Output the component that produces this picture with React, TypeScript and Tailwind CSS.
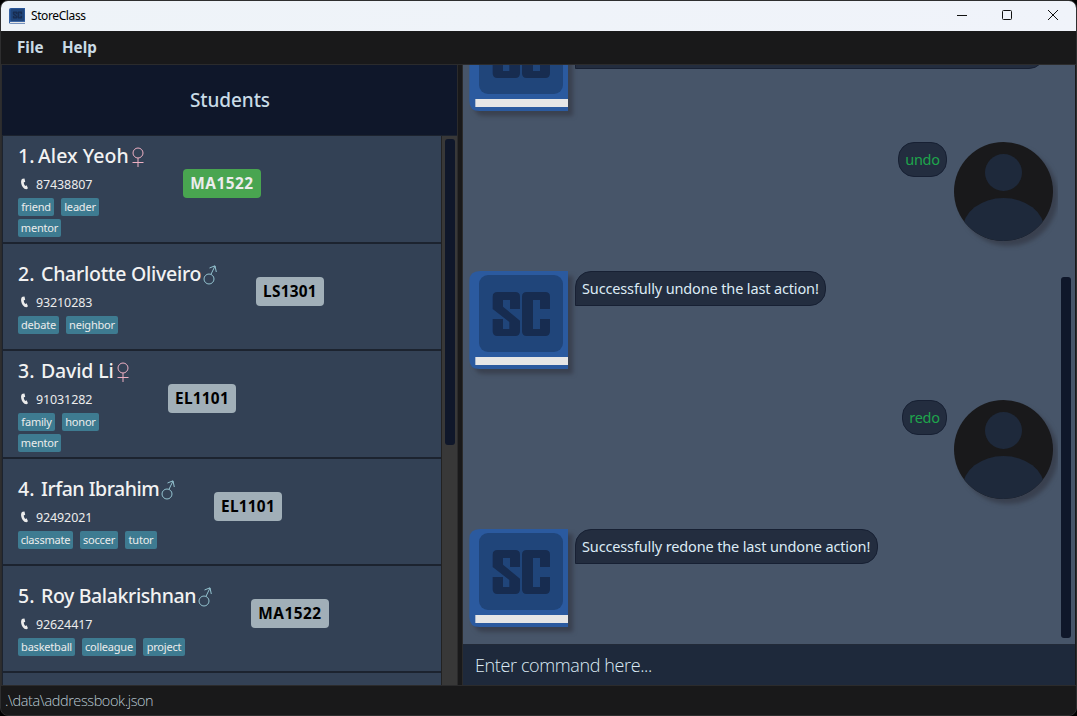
import type { ReactNode } from "react";

type Student = {
  index: string;
  name: string;
  female?: boolean;
  phone: string;
  tags: { label: string; size: string }[];
  module: string;
  badge: string;
  column: string;
  nameStyle: string;
};

const students: Student[] = [
  {
    index: "1.",
    name: "Alex Yeoh",
    female: true,
    phone: "87438807",
    tags: [
      { label: "friend", size: "w-9" },
      { label: "leader", size: "w-[38px]" },
      { label: "mentor", size: "w-[43px]" },
    ],
    module: "MA1522",
    badge: "w-[78px] bg-[#49a550] tracking-[0.5px] text-[#ececec]",
    column: "w-[165px]",
    nameStyle: "w-[93px] tracking-[0.05px]",
  },
  {
    index: "2.",
    name: "Charlotte Oliveiro",
    phone: "93210283",
    tags: [
      { label: "debate", size: "w-[41px]" },
      { label: "neighbor", size: "w-[52px]" },
    ],
    module: "LS1301",
    badge: "w-[68px] bg-[#a1afb8] tracking-[0.25px] text-black",
    column: "w-[238px]",
    nameStyle: "w-[162px] tracking-[-0.25px]",
  },
  {
    index: "3.",
    name: "David Li",
    female: true,
    phone: "91031282",
    tags: [
      { label: "family", size: "w-[37px]" },
      { label: "honor", size: "w-[37px]" },
      { label: "mentor", size: "w-[43px]" },
    ],
    module: "EL1101",
    badge: "w-[68px] bg-[#a1afb8] tracking-[0.25px] text-black",
    column: "w-[150px]",
    nameStyle: "w-[75px] tracking-[-0.15px]",
  },
  {
    index: "4.",
    name: "Irfan Ibrahim",
    phone: "92492021",
    tags: [
      { label: "classmate", size: "w-[55px]" },
      { label: "soccer", size: "w-[38px]" },
      { label: "tutor", size: "w-8" },
    ],
    module: "EL1101",
    badge: "w-[68px] bg-[#a1afb8] tracking-[0.25px] text-black",
    column: "w-[196px]",
    nameStyle: "w-[120px] tracking-[-0.48px]",
  },
  {
    index: "5.",
    name: "Roy Balakrishnan",
    phone: "92624417",
    tags: [
      { label: "basketball", size: "w-[57px]" },
      { label: "colleague", size: "w-[54px]" },
      { label: "project", size: "w-[42px]" },
    ],
    module: "MA1522",
    badge: "w-[78px] bg-[#a1afb8] tracking-[0.5px] text-black",
    column: "w-[233px]",
    nameStyle: "w-[157px] tracking-[-0.38px]",
  },
];

function Book({ className }: { className: string }) {
  return (
    <svg viewBox="27 33 297 297" className={className}>
      <path d="M324 33H60Q28 33 28 63V297Q28 327 58 327H324Z" fill="#2b5a9f" />
      <rect x="57" y="45" width="252" height="231" rx="27" fill="#20457a" />
      <path
        fill="#172c50"
        d="M98 110Q98 96 112 96H166Q180 96 180 110V147H150V120H129V140L180 182V214Q180 228 166 228H112Q98 228 98 214V177H129V207H148V186L98 147Z M186 110Q186 96 200 96H256Q270 96 270 110V147H240V120H219V207H240V177H270V214Q270 228 256 228H200Q186 228 186 214Z"
      />
      <rect x="46" y="291" width="278" height="24" fill="#e6e6e6" />
    </svg>
  );
}

function Person() {
  return (
    <svg viewBox="0 0 99 99" className="ml-[7px] size-[99px] shrink-0 drop-shadow-[5px_5px_2px_rgba(45,48,58,0.55)]">
      <defs>
        <clipPath id="disc">
          <circle cx="49.5" cy="49.5" r="49.5" />
        </clipPath>
      </defs>
      <circle cx="49.5" cy="49.5" r="49.5" fill="#19191b" />
      <g clipPath="url(#disc)" fill="#1e293b">
        <circle cx="49.5" cy="30.5" r="18.5" />
        <ellipse cx="49.5" cy="88" rx="41" ry="32" />
      </g>
    </svg>
  );
}

function Gender({ female }: { female?: boolean }) {
  return female ? (
    <svg viewBox="0 0 14 20" className="mt-px h-5 w-3.5 shrink-0" fill="none" stroke="#eeb0c3" strokeWidth="1">
      <circle cx="7" cy="6" r="5" />
      <path d="M7 11V20M1.5 15.5H12.5" />
    </svg>
  ) : (
    <svg viewBox="0 0 14 20" className="mt-px h-5 w-3.5 shrink-0" fill="none" stroke="#94c3d0" strokeWidth="1">
      <circle cx="6" cy="14" r="5" />
      <path d="M8 9.3L12 1M6.5 3L12 .8L13.3 7" />
    </svg>
  );
}

function StudentRow({ s }: { s: Student }) {
  // Female entries carry two lines of tags, so their cells start higher.
  const tall = s.female;
  return (
    <li
      className={`flex shrink-0 border-b-2 border-[#1c232f] bg-[#334155] pl-[15px] ${tall ? "h-[108px] pt-1.5" : "h-[107px] pt-4"}`}
    >
      <div className={`shrink-0 ${s.column}`}>
        <div className="flex h-7 items-center text-[19.5px] font-medium text-[#f2f2f2]">
          <span className={`shrink-0 ${s.index === "1." ? "w-5" : "w-[23px]"}`}>{s.index}</span>
          <span className={`shrink-0 whitespace-nowrap ${s.nameStyle}`}>{s.name}</span>
          <Gender female={s.female} />
        </div>
        <div className="flex h-7 items-center text-[#ececec]">
          <svg viewBox="0 0 10 12" className="ml-0.5 h-3 w-2.5" fill="#ececec">
            <path d="M2.6.8L4.5.4L5.2 3.8L3.7 4.4Q4 6.6 5.2 7.9L6.6 7.3L8 10.3L6.5 11.3Q4.5 11.5 2.7 9Q.4 5 1.3 2.2Q1.6 1.2 2.6.8Z" />
          </svg>
          <span className="ml-1.5 pt-0.5 text-[12.5px] tracking-[-0.12px]">{s.phone}</span>
        </div>
        <div className={`flex flex-wrap gap-x-[7px] gap-y-[3px] ${tall ? "w-[100px]" : ""}`}>
          {s.tags.map((t) => (
            <span
              key={t.label}
              className={`flex h-[18px] items-center justify-center rounded-[2px] bg-[#3e7b91] text-[11px] tracking-[-0.2px] text-[#ececec] ${t.size}`}
            >
              {t.label}
            </span>
          ))}
        </div>
      </div>
      <span
        className={`flex h-[29px] shrink-0 items-center justify-center rounded-[4px] text-[15.4px] font-bold ${s.badge} ${tall ? "mt-[27px]" : "mt-[17px]"}`}
      >
        {s.module}
      </span>
    </li>
  );
}

function Reply({ children, wide }: { children?: ReactNode; wide: string }) {
  return (
    <div className="flex h-[129px] shrink-0 items-start pl-1.5">
      <Book className="size-[99px] shrink-0 drop-shadow-[5px_5px_2px_rgba(45,48,58,0.55)]" />
      <div
        className={`ml-[7px] flex items-center rounded-2xl rounded-bl-none border border-[#172033] bg-[#232d3f] pl-1.5 text-[14.5px] tracking-[-0.14px] whitespace-nowrap text-[#dcebf5] ${wide}`}
      >
        {children}
      </div>
    </div>
  );
}

function Command({ children, wide }: { children: ReactNode; wide: string }) {
  return (
    <div className="flex h-[129px] w-[595px] shrink-0 items-start justify-end overflow-hidden pr-[5px]">
      <div
        className={`flex h-[35px] items-center justify-center rounded-2xl border border-[#172033] bg-[#232d3f] text-[14.5px] tracking-[-0.3px] text-[#1ea54c] ${wide}`}
      >
        {children}
      </div>
      <Person />
    </div>
  );
}

export default function App() {
  return (
    <div className="h-[716px] w-[1077px] bg-black font-['Noto_Sans','Open_Sans',sans-serif]">
      <div className="flex h-full w-full flex-col overflow-hidden rounded-lg border border-[#2e2e2f] bg-[#19191a]">
        <header className="flex h-[30px] shrink-0 items-center bg-linear-to-r from-[#eef3f8] to-[#f0f3fa] pl-2">
          <Book className="size-4" />
          <span className="ml-[6px] text-[12px] tracking-[-0.4px] text-black">StoreClass</span>
          <svg viewBox="0 0 120 30" className="mr-2 ml-auto h-[30px] w-[120px]" fill="none" stroke="#111" strokeWidth="1">
            <path d="M9 14.5H19" />
            <rect x="54.5" y="9.5" width="9" height="9" rx="1" />
            <path d="M100 9L110 19M110 9L100 19" />
          </svg>
        </header>
        <nav className="flex h-[34px] shrink-0 items-center border-b border-[#2b2b2c] pl-4 text-[15.2px] font-bold text-[#c9dbe6]">
          <span className="w-[45px]">File</span>
          <span>Help</span>
        </nav>
        <main className="flex h-[620px] shrink-0">
          <section className="flex w-[457px] shrink-0 flex-col border-x border-[#2b2b2c]">
            <h1 className="flex h-[71px] shrink-0 items-center justify-center border-b border-[#1c232f] bg-[#0f172a] pl-px text-[19px] font-medium tracking-[-0.1px] text-[#c9dbe6]">
              Students
            </h1>
            <div className="flex h-[549px]">
              <ul className="flex w-[439px] flex-col overflow-hidden border-l border-[#1c232f] bg-[#334155]">
                {students.map((s) => (
                  <StudentRow key={s.name} s={s} />
                ))}
              </ul>
              <div className="h-full w-4 border-l border-[#222] bg-[#383838] pt-[3px] pl-[3px]">
                <div className="h-[306px] w-2.5 rounded-[3px] bg-[#0f172a]" />
              </div>
            </div>
          </section>
          <section className="ml-1 flex w-[613px] shrink-0 flex-col border-l border-[#2b2b2c]">
            <div className="flex h-[579px] overflow-hidden bg-[#475569]">
              <div className="-mt-[52px] flex w-[595px] shrink-0 flex-col">
                <Reply wide="h-14 w-[470px]" />
                <Command wide="w-[49px]">undo</Command>
                <Reply wide="h-[35px] w-[251px]">Successfully undone the last action!</Reply>
                <Command wide="w-[45px]">redo</Command>
                <Reply wide="h-[35px] w-[303px]">Successfully redone the last undone action!</Reply>
              </div>
              <div className="mt-[212px] ml-[3px] h-[361px] w-2.5 rounded-[3px] bg-[#0f172a]" />
            </div>
            <div className="flex h-[41px] items-center border-t border-[#222a38] bg-[#1e293b] pl-3 font-['Open_Sans',sans-serif] text-[18px] font-light tracking-[-0.38px] text-[#dcebf5]">
              Enter command here...
            </div>
          </section>
        </main>
        <footer className="flex h-[30px] items-center border-t border-[#2b2b2c] pl-1 font-['Open_Sans',sans-serif] text-[14.5px] font-light tracking-[-0.4px] text-[#b9c9d3]">
          .\data\addressbook.json
        </footer>
      </div>
    </div>
  );
}
